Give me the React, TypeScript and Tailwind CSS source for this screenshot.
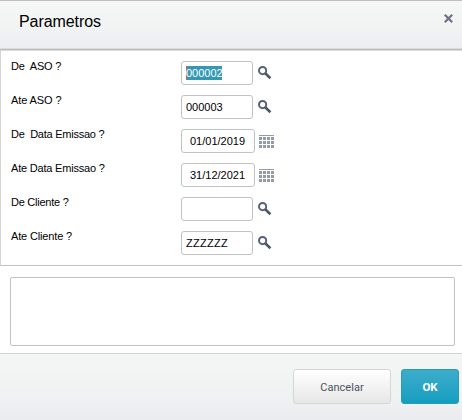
import clsx from "clsx";

type Field = {
	label: string;
	value: string;
	kind: "search" | "date";
	selected?: boolean;
	labelClass?: string;
	valueClass?: string;
};

const fields: Field[] = [
	{ label: "De  ASO ?", value: "000002", kind: "search", selected: true, labelClass: "tracking-[-0.2px]" },
	{ label: "Ate ASO ?", value: "000003", kind: "search", labelClass: "tracking-[-0.1px]" },
	{ label: "De  Data Emissao ?", value: "01/01/2019", kind: "date", labelClass: "tracking-[-0.25px]" },
	{ label: "Ate Data Emissao ?", value: "31/12/2021", kind: "date", labelClass: "tracking-[-0.2px]" },
	{ label: "De Cliente ?", value: "", kind: "search", labelClass: "tracking-[-0.25px]" },
	{
		label: "Ate Cliente ?",
		value: "ZZZZZZ",
		kind: "search",
		labelClass: "tracking-[-0.15px]",
		valueClass: "tracking-[0.28px]",
	},
];

const SearchIcon = () => (
	<svg width="14" height="14" viewBox="0 0 14 14" className="ml-[5px] mt-[5px] shrink-0">
		<circle cx="4.6" cy="4.6" r="3.6" fill="none" stroke="#566176" strokeWidth="2" />
		<path d="M7.2 7.2 L12.4 12.2" stroke="#4c586d" strokeWidth="2.6" />
	</svg>
);

const CalendarIcon = () => (
	<svg
		width="15"
		height="13"
		viewBox="0 0 15 13"
		shapeRendering="crispEdges"
		fill="#949aa8"
		className="ml-1 mt-[6px] shrink-0"
	>
		<rect width="15" height="1" />
		{[2, 6, 10].map((y) =>
			[0, 4, 8, 12].map((x) => <rect key={`${x}-${y}`} x={x} y={y} width="3" height="3" />)
		)}
	</svg>
);

const CloseIcon = () => (
	<svg width="9" height="9" viewBox="0 0 9 9" className="mt-[13px] mr-[9px]">
		<path d="M0.8 0.8 L8.2 8.2 M8.2 0.8 L0.8 8.2" stroke="#6b7284" strokeWidth="2.2" />
	</svg>
);

const FieldRow = ({ label, value, kind, selected, labelClass, valueClass }: Field) => (
	<div className="flex h-[34px] items-start">
		<label className={clsx("-mt-px w-[170px] shrink-0 whitespace-pre leading-[13px]", labelClass)}>{label}</label>
		<div
			className={clsx(
				"flex h-6 shrink-0 items-center rounded-[3px] border border-[#c0c4c5] bg-white",
				kind === "date" ? "w-[74px] pl-2" : "w-[72px] pl-1"
			)}
		>
			<span
				className={clsx(
					"leading-[14px]",
					valueClass,
					selected && "w-9 bg-[#3399b5] text-white shadow-[inset_1px_0_#cc664a]"
				)}
			>
				{value}
			</span>
		</div>
		{kind === "date" ? <CalendarIcon /> : <SearchIcon />}
	</div>
);

const App = () => {
	return (
		<div className="flex h-[420px] w-[462px] flex-col overflow-hidden bg-white font-['Liberation_Sans',Arial,sans-serif] text-[11px] text-black">
			{/* Title bar */}
			<header className="flex h-[50px] shrink-0 items-start justify-between border-t border-b border-t-[#bdbdbd] border-b-[#bebebe] bg-linear-to-b from-[#f6f6f6] via-[#f2f4f4] to-[#ebedf0] shadow-[inset_0_-1px_#d9d9d9]">
				<h1 className="mt-3 ml-[19px] text-[16px] leading-[18px] tracking-[-0.08px]">Parametros</h1>
				<button aria-label="Fechar">
					<CloseIcon />
				</button>
			</header>

			{/* Fields */}
			<main className="h-[216px] shrink-0 border-t border-b border-l border-t-[#d9d9d9] border-b-[#c3c3c3] border-l-[#d4d4d4] pt-[10px] pl-[10px]">
				{fields.map((field) => (
					<FieldRow key={field.label} {...field} />
				))}
			</main>

			<div className="mt-[11px] ml-[10px] h-[69px] w-[445px] shrink-0 rounded-[2px] border border-[#c2c4c4]" />

			{/* Actions */}
			<footer className="mt-[7px] flex flex-1 items-start justify-end gap-[10px] border-t border-[#d3d3d3] bg-linear-to-b from-[#f5f5f5] via-[#f1f3f3] to-[#ebecef] pt-[15px] pr-[3px] font-[Roboto,sans-serif]">
				<button className="h-[35px] w-[98px] rounded-[3px] border border-[#d5d5d5] bg-linear-to-b from-white to-[#e7e7e8] pt-[3px] tracking-[0.05px] text-[#4c535f]">
					Cancelar
				</button>
				<button className="h-[35px] w-[58px] rounded-[3px] border border-[#299ab8] bg-linear-to-b from-[#3cadcb] to-[#119dc0] pt-[3px] text-[11.5px] font-bold text-white">
					OK
				</button>
			</footer>
		</div>
	);
};

export default App;
